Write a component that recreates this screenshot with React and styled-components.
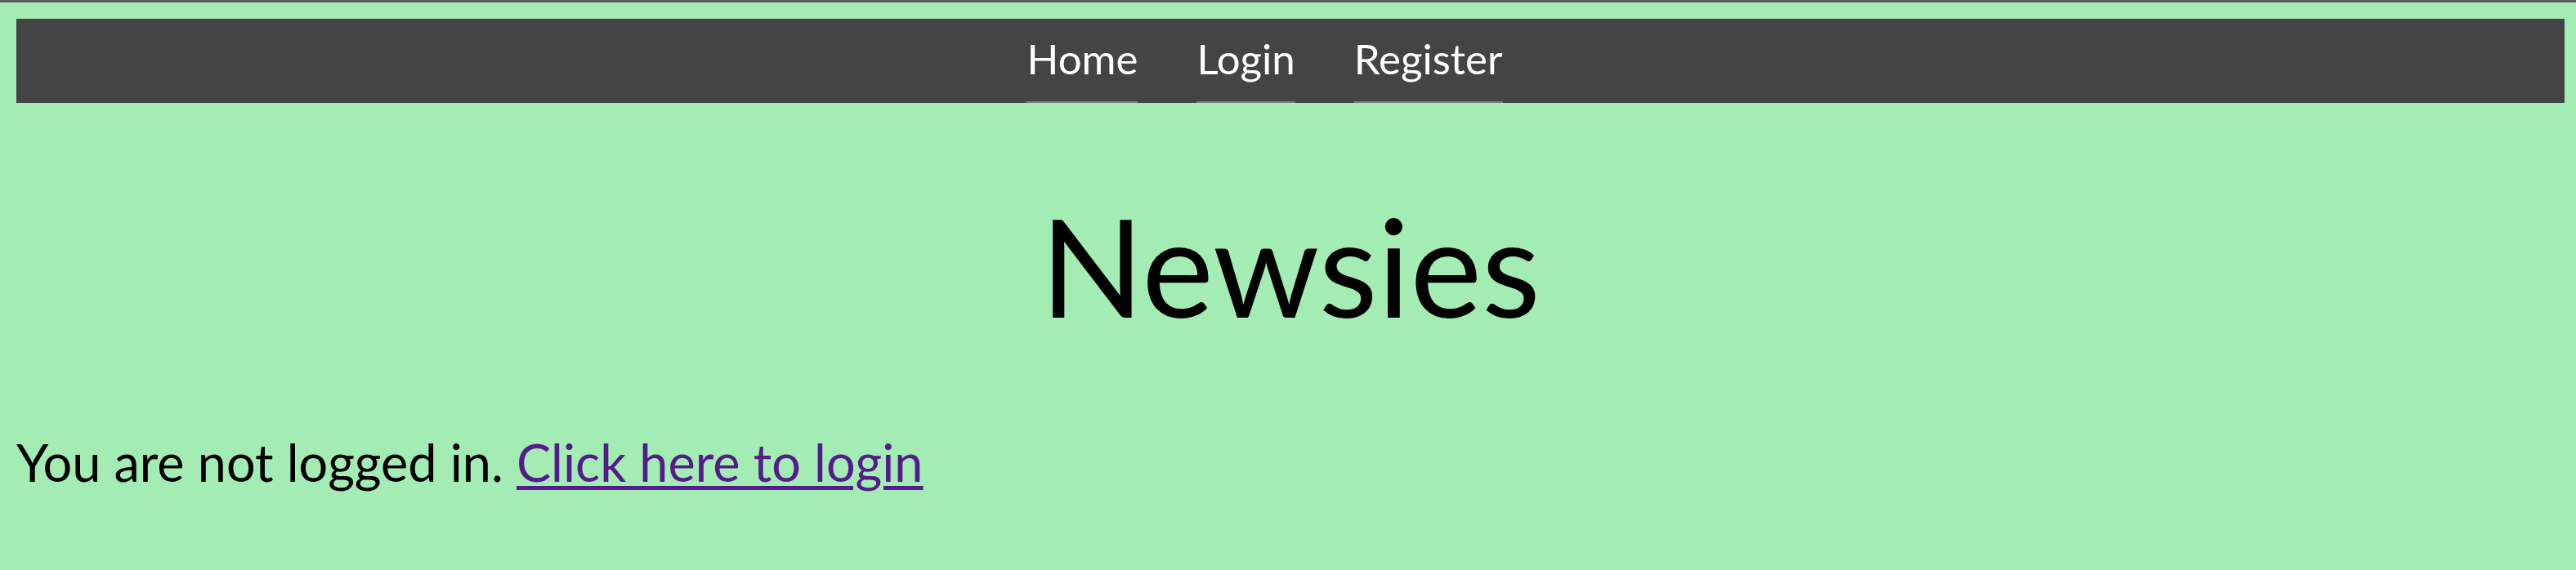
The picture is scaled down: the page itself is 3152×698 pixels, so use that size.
import React from 'react'
import styled, { createGlobalStyle } from 'styled-components'

const GlobalStyle = createGlobalStyle`
  html, body {
    margin: 0;
    padding: 0;
    background: #a3ecb3;
    font-family: Lato, "Open Sans", sans-serif;
  }
`

const TopStrip = styled.div`
  height: 3px;
  background: #5f5f5f;
`

const Page = styled.div`
  padding: 20px 14px 60px 20px;
`

const NavBar = styled.nav`
  background: #444444;
  height: 103px;
`

const NavList = styled.ul`
  display: flex;
  justify-content: center;
  gap: 72px;
  height: 100%;
  margin: 0;
  padding: 0 63px 0 0;
  list-style: none;
`

const NavLink = styled.a`
  display: flex;
  align-items: center;
  height: 100%;
  box-sizing: border-box;
  padding-bottom: 4px;
  border-bottom: 2px solid #7a7a7a;
  color: #ffffff;
  font-size: 51px;
  text-decoration: none;
`

const Title = styled.h1`
  margin: 104px 0 0;
  font-size: 166px;
  font-weight: 400;
  line-height: 190px;
  text-align: center;
  color: #000;
`

const Message = styled.p`
  margin: 108px 0 0;
  font-size: 63px;
  line-height: 76px;
  color: #000;

  & > a {
    color: #551a8b;
    text-decoration-thickness: 5px;
    text-underline-offset: 5px;
  }
`

const links = ['Home', 'Login', 'Register']

export default function App() {
  return (
    <>
      <GlobalStyle />
      <TopStrip />
      <Page>
        <NavBar>
          <NavList>
            {links.map(l => (
              <li key={l}>
                <NavLink href="#">{l}</NavLink>
              </li>
            ))}
          </NavList>
        </NavBar>
        <Title>Newsies</Title>
        <Message>
          You are not logged in. <a href="#">Click here to login</a>
        </Message>
      </Page>
    </>
  )
}
